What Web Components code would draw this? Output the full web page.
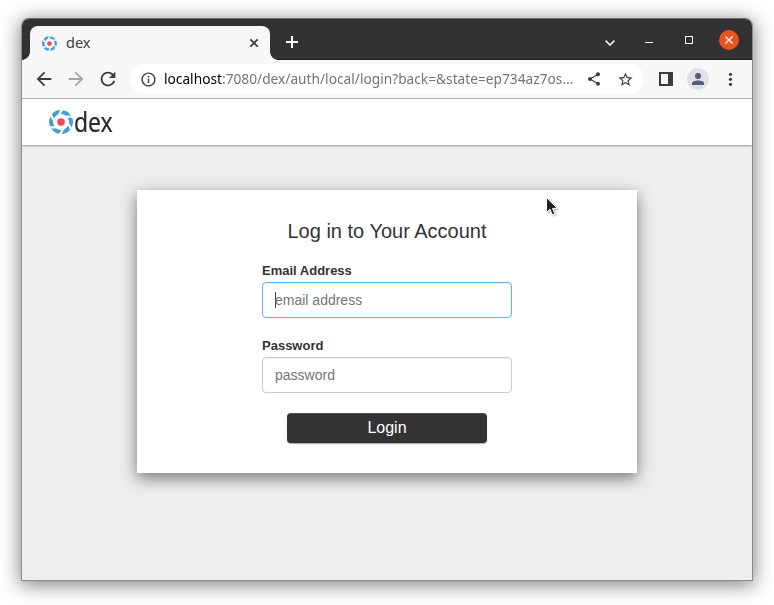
<!DOCTYPE html>
<html lang="en"><head><meta charset="utf-8"><title>dex</title>
<style>
html,body{margin:0;height:100%;overflow:hidden;background:#fff}
body{font-family:"Noto Sans",sans-serif}
</style></head><body>
<app-window>
  <tab-strip slot="top"></tab-strip>
  <tool-bar slot="top"></tool-bar>
  <page-header></page-header>
  <login-panel></login-panel>
</app-window>
<mouse-pointer></mouse-pointer>
<script>
const define=(name,html)=>customElements.define(name,class extends HTMLElement{
  constructor(){super();const t=document.createElement('template');t.innerHTML=html;
    this.attachShadow({mode:'open'}).appendChild(t.content.cloneNode(true));}
});

/* Pinwheel mark: six blades around a red hub */
customElements.define('dex-mark',class extends HTMLElement{
  constructor(){super();
    let b='';
    for(let i=0;i<6;i++)b+=`<path transform="rotate(${i*60-22} 12 12)" d="M6.6 1.3A12 12 0 0 1 16 .8Q13.6 1.9 12.4 3.9Q9.6 3.9 7 5.9Q6 3.6 6.6 1.3Z"/>`;
    this.attachShadow({mode:'open'}).innerHTML=`<style>:host{display:block;width:24px;height:24px}svg{display:block;width:100%;height:100%;overflow:visible}</style>
    <svg viewBox="0 0 24 24"><g fill="#449fd8">${b}</g><circle cx="12" cy="12" r="3.8" fill="#f04d5c"/></svg>`;}
});

define('app-window',`<style>
:host{display:flex;flex-direction:column;box-sizing:border-box;width:732px;height:563px;margin:18px 0 0 21px;border:1px solid #8c8c8c;border-top-color:#6e6e6e;border-radius:8px 8px 0 0;background:#eee;overflow:hidden;box-shadow:0 3px 19px 1px rgba(0,0,0,.5)}
main{flex:1;display:flex;flex-direction:column}
</style><slot name="top"></slot><main><slot></slot></main>`);

define('tab-strip',`<style>
:host{display:flex;height:41px;flex:none;background:linear-gradient(#333132 40px,#1c1a1b 40px);color:#3c4043}
.foot{width:8px;height:8px;align-self:flex-end;background:radial-gradient(circle at 0 0,transparent 7.5px,#f7f7f7 8px)}
.foot.r{background:radial-gradient(circle at 100% 0,transparent 7.5px,#f7f7f7 8px)}
.tab{width:240px;height:34px;margin-top:7px;box-sizing:border-box;border-radius:8px 8px 0 0;background:#f7f7f7;display:flex;align-items:center;padding:0 11px 0 12px}
dex-mark{width:15px;height:15px;margin-right:9px}
.tab span{flex:1;font-size:14.5px;line-height:20px;margin-top:-3px}
svg{display:block;flex:none}
.plus{margin:17px 0 0 8px}
.controls{margin-left:auto;display:flex;align-items:center;padding:0 13px 0 0;height:41px}
.chev{margin:6px 30px 0 0}.min{margin:5px 32px 0 0}.max{margin-right:26px}
.close{width:20px;height:20px;border-radius:50%;background:#e95420;display:grid;place-items:center}
</style>
<div class="foot"></div>
<div class="tab"><dex-mark></dex-mark><span>dex</span>
<svg width="10" height="10" viewBox="0 0 10 10" stroke="#3c3c3c" stroke-width="1.7"><path d="M1.3 1.3 8.7 8.7M8.7 1.3 1.3 8.7"/></svg></div>
<div class="foot r"></div>
<svg class="plus" width="12" height="12" viewBox="0 0 12 12" stroke="#fff" stroke-width="2"><path d="M6 0V12M0 6H12"/></svg>
<div class="controls">
<svg class="chev" width="10" height="6" viewBox="0 0 10 6" fill="none" stroke="#eee" stroke-width="1.7"><path d="M.6.6 5 5 9.4.6"/></svg>
<svg class="min" width="8" height="1"><path fill="#fff" d="M0 0H8V1H0Z"/></svg>
<svg class="max" width="8" height="8" fill="none" stroke="#fff"><path d="M.5 .5H7.5V7.5H.5Z"/></svg>
<div class="close"><svg width="8" height="8" viewBox="0 0 8 8" stroke="#fff" stroke-width="1.3"><path d="M.4.4 7.6 7.6M7.6.4.4 7.6"/></svg></div>
</div>`);

define('tool-bar',`<style>
:host{display:flex;align-items:center;flex:none;box-sizing:border-box;height:39px;border-bottom:1px solid #bababa;background:#f7f7f7;padding:0 11px;color:#3c3c3c}
svg{display:block;fill:currentColor;flex:none}
.nav{width:22px;height:22px;margin-right:10px}
.off{color:#a5a5a5}
.url{display:flex;align-items:center;box-sizing:border-box;width:514px;height:30px;border-radius:15px;background:#fff;padding:0 10px 0 10px;margin-left:1px}
.txt{width:422px;margin-left:7px;font-size:14px;line-height:20px;white-space:nowrap;color:#757575}
.txt span{display:inline-block;transform:scaleX(.98);transform-origin:0 50%}
b{font-weight:400;color:#000}
.side{margin-left:15px}
.av{width:22px;height:22px;border-radius:50%;background:#dfe1e6;color:#525d72;margin-left:14px;display:grid;place-items:center}
.dots{margin-left:19px}
</style>
<svg class="nav" viewBox="0 0 24 24"><path d="M20 11H7.83l5.59-5.59L12 4l-8 8 8 8 1.41-1.41L7.83 13H20v-2z"/></svg>
<svg class="nav off" viewBox="0 0 24 24"><path d="M12 4l-1.41 1.41L16.17 11H4v2h12.17l-5.58 5.59L12 20l8-8z"/></svg>
<svg class="nav" viewBox="0 0 24 24"><path d="M17.65 6.35C16.2 4.9 14.21 4 12 4c-4.42 0-7.99 3.58-7.99 8s3.57 8 7.99 8c3.73 0 6.84-2.55 7.73-6h-2.08c-.82 2.33-3.04 4-5.65 4-3.31 0-6-2.69-6-6s2.69-6 6-6c1.66 0 3.14.69 4.22 1.78L13 11h7V4l-2.35 2.35z"/></svg>
<div class="url">
<svg width="17" height="17" viewBox="0 0 24 24"><path d="M11 7h2v2h-2zm0 4h2v6h-2zm1-9C6.48 2 2 6.48 2 12s4.48 10 10 10 10-4.48 10-10S17.52 2 12 2zm0 18c-4.41 0-8-3.59-8-8s3.59-8 8-8 8 3.59 8 8-3.59 8-8 8z"/></svg>
<div class="txt"><span><b>localhost</b>:7080/dex/auth/local/login?back=&amp;state=ep734az7os…</span></div>
<svg width="16" height="16" viewBox="0 0 24 24"><path d="M18 16.08c-.76 0-1.44.3-1.96.77L8.91 12.7c.05-.23.09-.46.09-.7s-.04-.47-.09-.7l7.05-4.11c.54.5 1.25.81 2.04.81 1.66 0 3-1.34 3-3s-1.34-3-3-3-3 1.34-3 3c0 .24.04.47.09.7L8.04 9.81C7.5 9.31 6.79 9 6 9c-1.66 0-3 1.34-3 3s1.34 3 3 3c.79 0 1.5-.31 2.04-.81l7.12 4.16c-.05.21-.08.43-.08.65 0 1.61 1.31 2.92 2.92 2.92s2.92-1.31 2.92-2.92-1.31-2.92-2.92-2.92z"/></svg>
<svg width="17" height="17" viewBox="0 0 24 24" style="margin-left:15px"><path d="M22 9.24l-7.19-.62L12 2 9.19 8.63 2 9.24l5.46 4.73L5.82 21 12 17.27 18.18 21l-1.63-7.03L22 9.24zM12 15.4l-3.76 2.27 1-4.28-3.32-2.88 4.38-.38L12 6.1l1.71 4.04 4.38.38-3.32 2.88 1 4.28L12 15.4z"/></svg>
</div>
<svg class="side" width="14" height="14"><path fill-rule="evenodd" d="M0 0H14V14H0ZM2 2V12H9V2Z"/></svg>
<div class="av"><svg width="12" height="12" viewBox="0 0 12 12"><circle cx="6" cy="3" r="3"/><path d="M0 12V10.4C0 8.6 3 7.6 6 7.6S12 8.6 12 10.4V12Z"/></svg></div>
<svg class="dots" width="5" height="14" viewBox="0 0 5 14"><circle cx="2.5" cy="2.3" r="1.6"/><circle cx="2.5" cy="7.3" r="1.6"/><circle cx="2.5" cy="12.3" r="1.6"/></svg>`);

define('page-header',`<style>
:host{display:flex;align-items:center;flex:none;height:46px;background:#fff;box-shadow:0 1px 2px rgba(0,0,0,.38);padding-left:27px}
dex-mark{margin-top:-1px}
span{font-size:27.5px;line-height:30px;color:#2b2829;transform:scaleX(.835);transform-origin:0 50%;margin-left:1px;height:30px;-webkit-text-stroke:.2px #2b2829}
</style><dex-mark></dex-mark><span>dex</span>`);

define('form-field',`<style>
:host{display:block;width:250px;margin:0 auto 20px;text-align:left}
label{display:block;font-size:13px;font-weight:700;line-height:16px;height:19px}
.box{display:flex;align-items:center;box-sizing:border-box;height:36px;border:1px solid #ccc;border-radius:4px;padding:0 12px;background:#fff;color:#757575;font-size:14px;line-height:20px;box-shadow:inset 0 1px 1px rgba(0,0,0,.075)}
:host([focused]) .box{border-color:#66afe9}
i{display:none;width:1px;height:16px;margin-right:-1px;background:#444}
:host([focused]) i{display:block}
</style><label><slot name="label"></slot></label><div class="box"><i></i><slot></slot></div>`);

define('login-panel',`<style>
:host{display:block;box-sizing:border-box;width:500px;height:283px;margin:45px auto 0;background:#fff;box-shadow:0 5px 15px rgba(0,0,0,.5);padding-top:30px;font-family:"Liberation Sans",Arial,sans-serif;color:#333;text-align:center}
h2{font-size:20px;font-weight:400;line-height:23px;margin:0 0 20px}
button{display:block;width:200px;height:30px;margin:0 auto;padding:0 0 1px;border:0;border-radius:4px;background:#333;color:#fff;font:16px/29px "Liberation Sans",Arial,sans-serif;box-shadow:inset 0 1px 0 rgba(255,255,255,.15),0 1px 1px rgba(0,0,0,.35)}
</style>
<h2>Log in to Your Account</h2>
<form-field focused><span slot="label">Email Address</span>email address</form-field>
<form-field><span slot="label">Password</span>password</form-field>
<button type="button">Login</button>`);

define('mouse-pointer',`<style>:host{position:absolute;left:545px;top:196px;filter:drop-shadow(1px 1px 1px rgba(0,0,0,.3))}svg{display:block}</style>
<svg width="14" height="22" viewBox="0 0 14 22"><path fill="#222" stroke="#fff" d="M1.5 1.5V16.5L5 13.2 7.2 18.8 9.8 17.8 7.5 12.4H12.3Z"/></svg>`);
</script></body></html>
